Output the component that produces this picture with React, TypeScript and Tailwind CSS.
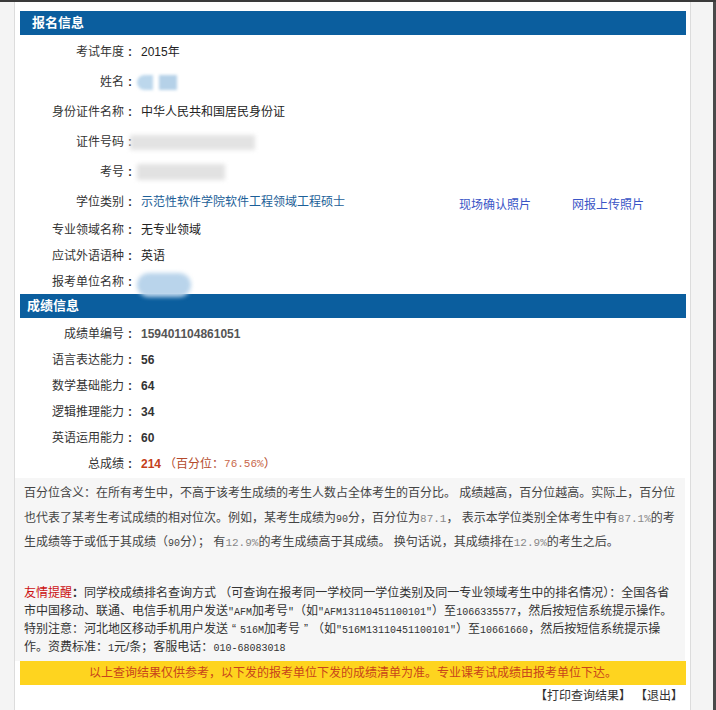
import React from "react";

const Lat = ({ children }: { children: React.ReactNode }) => (
  <span className="font-['Liberation_Mono'] text-[10px] leading-none">{children}</span>
);

// full-width curly quote, as the page's CJK font draws it
const Q = ({ children }: { children: React.ReactNode }) => (
  <span className="inline-block w-[12px] text-center leading-none">{children}</span>
);

const Num = ({ children }: { children: React.ReactNode }) => (
  <span className="text-[#888] font-['Liberation_Mono'] text-[11px] leading-none">{children}</span>
);

const infoRows: { label: string; h: string; value: React.ReactNode }[] = [
  { label: "考试年度", h: "h-[30px]", value: <span>2015年</span> },
  {
    label: "姓名",
    h: "h-[30px]",
    value: (
      <span className="flex items-center gap-[6px] -ml-[4px]">
        <span className="block w-[16px] h-[15px] rounded-l-full bg-[#bcd7ec] blur-[1.5px]" />
        <span className="block w-[18px] h-[15px] bg-[#b5d1e8] blur-[1.5px]" />
      </span>
    ),
  },
  { label: "身份证件名称", h: "h-[30px]", value: <span>中华人民共和国居民身份证</span> },
  {
    label: "证件号码",
    h: "h-[30px]",
    value: <span className="block -ml-[11px] w-[125px] h-[15px] bg-[#e3e3e3] blur-[2px]" />,
  },
  {
    label: "考号",
    h: "h-[30px]",
    value: <span className="block -ml-[4px] w-[88px] h-[16px] bg-[#e2e2e2] blur-[2px]" />,
  },
  {
    label: "学位类别",
    h: "h-[30px]",
    value: (
      <span className="flex items-center">
        <span className="w-[318px] text-[#1d5f98]">示范性软件学院软件工程领域工程硕士</span>
        <a className="w-[113px] pt-[5px] text-[#3a55c6]">现场确认照片</a>
        <a className="pt-[5px] text-[#3a55c6]">网报上传照片</a>
      </span>
    ),
  },
  { label: "专业领域名称", h: "h-[26px]", value: <span>无专业领域</span> },
  { label: "应试外语语种", h: "h-[26px]", value: <span>英语</span> },
  {
    label: "报考单位名称",
    h: "h-[26px]",
    value: <span className="block -ml-[4px] mt-[6px] w-[54px] h-[24px] rounded-full bg-[#b9d4eb] blur-[2px]" />,
  },
];

const scoreRows: { label: string; value: React.ReactNode }[] = [
  { label: "成绩单编号", value: <b className="text-[#555]">159401104861051</b> },
  { label: "语言表达能力", value: <b className="text-[#333]">56</b> },
  { label: "数学基础能力", value: <b className="text-[#333]">64</b> },
  { label: "逻辑推理能力", value: <b className="text-[#333]">34</b> },
  { label: "英语运用能力", value: <b className="text-[#333]">60</b> },
  {
    label: "总成绩",
    value: (
      <span className="flex items-center">
        <b className="text-[#c4401b]">214</b>
        <span className="ml-[3px] text-[#b44a2c]">（百分位：</span>
        <span className="text-[#c8684c] font-['Liberation_Mono'] text-[11px]">76.56%</span>
        <span className="text-[#b44a2c]">）</span>
      </span>
    ),
  },
];

function Row({ label, value, h }: { label: string; value: React.ReactNode; h: string }) {
  return (
    <div className={`flex items-center pt-[4px] ${h}`}>
      <div className="w-[109px] shrink-0 text-right text-[#333]">{label}</div>
      <div className="w-[12px] shrink-0 text-center font-bold text-[#333]">:</div>
      <div className="pl-[5px] text-[#222] flex items-center">{value}</div>
    </div>
  );
}

function SectionBar({ title, pl }: { title: string; pl: string }) {
  return (
    <div className={`ml-[5px] mr-[4px] h-[24px] bg-[#0b5e9e] flex items-center ${pl} text-white font-bold text-[13px]`}>
      {title}
    </div>
  );
}

export default function App() {
  return (
    <div className="w-[716px] h-[710px] overflow-hidden bg-[#f4f4f4] font-['Liberation_Sans','Noto_Sans_CJK_SC',sans-serif] text-[12px] leading-[16px]">
      <div className="h-[2px] bg-[#3a3a3a]" />
      <div className="flex h-[708px]">
        <div className="w-[15px] shrink-0 bg-[#f4f4f4] border-r border-[#dcdcdc]" />
        <div className="w-[675px] shrink-0 bg-white pt-[9px]">
          <SectionBar title="报名信息" pl="pl-[12px]" />
          {infoRows.map((r) => (
            <Row key={r.label} label={r.label} value={r.value} h={r.h} />
          ))}
          <div className="h-[1px]" />
          <SectionBar title="成绩信息" pl="pl-[7px]" />
          <div className="pt-[1px]">
            {scoreRows.map((r) => (
              <Row key={r.label} label={r.label} value={r.value} h="h-[26px]" />
            ))}
          </div>

          <div className="mt-[3px] mr-[5px] h-[183px] overflow-hidden bg-[#f6f6f6] pl-[9px] pt-[3px] text-[#444]">
            <p className="leading-[24.5px] whitespace-nowrap">
              百分位含义：在所有考生中，不高于该考生成绩的考生人数占全体考生的百分比。 成绩越高，百分位越高。实际上，百分位
              <br />
              也代表了某考生考试成绩的相对位次。例如，某考生成绩为<Lat>90</Lat>分，百分位为<Num>87.1</Num>， 表示本学位类别全体考生中有<Num>87.1%</Num>的考
              <br />
              生成绩等于或低于其成绩（<Lat>90</Lat>分）； 有<Num>12.9%</Num>的考生成绩高于其成绩。 换句话说，其成绩排在<Num>12.9%</Num>的考生之后。
            </p>
            <p className="mt-[29px] leading-[18px] whitespace-nowrap text-[#333]">
              <span className="text-[#cc1111]">友情提醒</span>
              <b>：</b>同学校成绩排名查询方式 （可查询在报考同一学校同一学位类别及同一专业领域考生中的排名情况）：全国各省
              <br />
              市中国移动、联通、电信手机用户发送<Lat>"AFM</Lat>加考号<Lat>"</Lat>（如<Lat>"AFM13110451100101"</Lat>）至<Lat>1066335577</Lat>，然后按短信系统提示操作。
              <br />
              特别注意：河北地区移动手机用户发送<Q>“</Q><Lat>516M</Lat>加考号<Q>”</Q>（如<Lat>"516M13110451100101"</Lat>）至<Lat>10661660</Lat>，然后按短信系统提示操
              <br />
              作。资费标准：<Lat>1</Lat>元/条；客服电话：<Lat>010-68083018</Lat>
            </p>
          </div>

          <div className="ml-[5px] mr-[4px] h-[24px] bg-[#fed41f] flex items-center justify-center text-[#c8441b]">
            以上查询结果仅供参考，以下发的报考单位下发的成绩清单为准。专业课考试成绩由报考单位下达。
          </div>
          <div className="flex justify-end pr-[7px] h-[22px] items-center text-[#333]">
            <a>【打印查询结果】</a>
            <span className="w-[4px]" />
            <a>【退出】</a>
          </div>
        </div>
        <div className="w-[23px] shrink-0 bg-[#f4f4f4] border-l border-[#dcdcdc]" />
        <div className="w-[3px] shrink-0 bg-[#4a4a4a]" />
      </div>
    </div>
  );
}
